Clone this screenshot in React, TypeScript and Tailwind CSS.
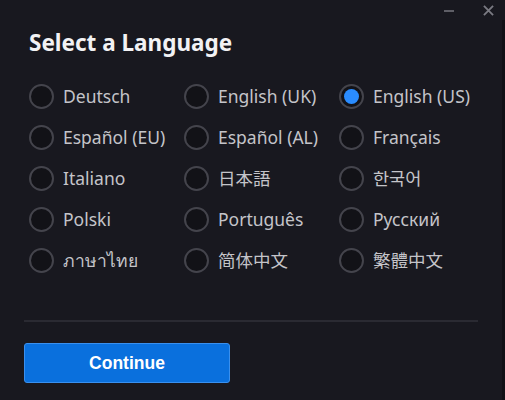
import { useState } from "react";

const LANGUAGES = [
  "Deutsch",
  "English (UK)",
  "English (US)",
  "Español (EU)",
  "Español (AL)",
  "Français",
  "Italiano",
  "日本語",
  "한국어",
  "Polski",
  "Português",
  "Русский",
  "ภาษาไทย",
  "简体中文",
  "繁體中文",
];

function Radio({ checked }: { checked: boolean }) {
  return (
    <span className="flex h-[25px] w-[25px] shrink-0 items-center justify-center rounded-full border-2 border-[#44444c] bg-[#121217]">
      {checked && <span className="h-[15px] w-[15px] rounded-full bg-[#2a8cff]" />}
    </span>
  );
}

export default function App() {
  const [selected, setSelected] = useState("English (US)");

  return (
    <div
      className="relative flex h-[400px] w-[505px] flex-col bg-[#18181f] text-[#c4c4c9]"
      style={{ fontFamily: '"Noto Sans", "Noto Sans CJK JP", "Noto Sans CJK KR", sans-serif' }}
    >
      {/* window controls */}
      <div className="absolute right-[11px] top-[5px] flex items-center gap-[29px] text-[#7a7a82]">
        <span className="block h-[2px] w-[10px] bg-[#5e5e66]" />
        <svg width="11" height="11" viewBox="0 0 12 12" stroke="currentColor" strokeWidth={2}>
          <path d="M1 1l10 10M11 1L1 11" />
        </svg>
      </div>
      <div className="absolute bottom-0 right-0 top-[20px] w-[3px] bg-[#111116]" />

      <h1 className="pl-[29px] pt-[28px] text-[22.5px] font-bold leading-[30px] text-[#f2f2f4]">
        Select a Language
      </h1>

      <div className="mt-[26px] grid grid-cols-[155px_155px_155px] gap-y-[16px] pl-[29px]">
        {LANGUAGES.map((lang) => (
          <button
            key={lang}
            type="button"
            onClick={() => setSelected(lang)}
            className="flex h-[25px] items-center gap-[9px] whitespace-nowrap text-left text-[17.5px] leading-none"
          >
            <Radio checked={selected === lang} />
            <span>{lang}</span>
          </button>
        ))}
      </div>

      <div className="mx-[24px] mt-[47px] h-[2px] w-[454px] bg-[#2a2a32]" />

      <button
        type="button"
        className="ml-[24px] mt-[21px] flex h-[40px] w-[206px] items-center justify-center rounded-[3px] border border-[#3a90ee] bg-[#0a70dd] text-[17.5px] font-bold text-white"
        style={{ fontFamily: '"Liberation Sans", Arial, sans-serif' }}
      >
        Continue
      </button>
    </div>
  );
}
